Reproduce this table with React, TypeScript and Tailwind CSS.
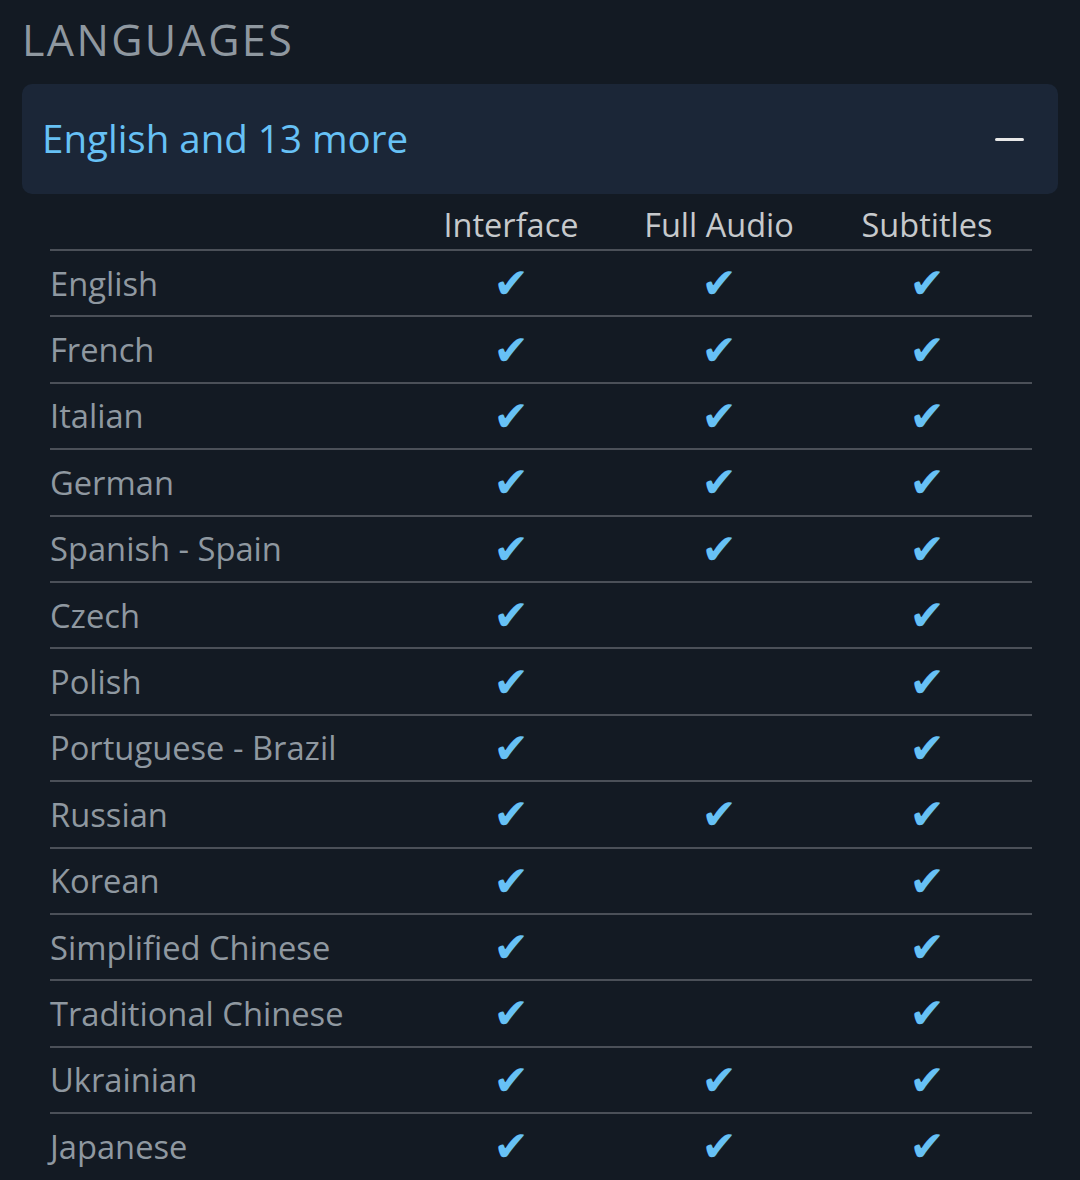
import React from "react";

type Lang = { name: string; ui: boolean; audio: boolean; subs: boolean };

const languages: Lang[] = [
  { name: "English", ui: true, audio: true, subs: true },
  { name: "French", ui: true, audio: true, subs: true },
  { name: "Italian", ui: true, audio: true, subs: true },
  { name: "German", ui: true, audio: true, subs: true },
  { name: "Spanish - Spain", ui: true, audio: true, subs: true },
  { name: "Czech", ui: true, audio: false, subs: true },
  { name: "Polish", ui: true, audio: false, subs: true },
  { name: "Portuguese - Brazil", ui: true, audio: false, subs: true },
  { name: "Russian", ui: true, audio: true, subs: true },
  { name: "Korean", ui: true, audio: false, subs: true },
  { name: "Simplified Chinese", ui: true, audio: false, subs: true },
  { name: "Traditional Chinese", ui: true, audio: false, subs: true },
  { name: "Ukrainian", ui: true, audio: true, subs: true },
  { name: "Japanese", ui: true, audio: true, subs: true },
];

function Check({ on }: { on: boolean }) {
  return (
    <div className="flex items-center justify-center pt-[2px]">
      {on && (
        <span className="text-[#67c1f5] text-[42px] leading-none font-['DejaVu_Sans',sans-serif]">
          ✔
        </span>
      )}
    </div>
  );
}

export default function App() {
  return (
    <div className="min-h-screen bg-[#131a23] px-[22px] pt-[14px] font-['Open_Sans',sans-serif] overflow-hidden">
      {/* Title */}
      <h2 className="text-[43px] leading-[52px] tracking-[2.4px] text-[#8f98a0]">
        LANGUAGES
      </h2>

      {/* Collapsible header */}
      <div className="mt-[18px] h-[110px] rounded-[10px] bg-[#1b2637] flex items-center justify-between pl-[20px] pr-[34px]">
        <span className="text-[38.5px] text-[#67c1f5]">English and 13 more</span>
        <span className="block w-[29px] h-[3px] rounded-full bg-[#e8e8e8]" />
      </div>

      {/* Table */}
      <div className="ml-[28px] w-[982px]">
        <div className="grid grid-cols-[357px_208px_208px_208px] h-[55px] items-center text-[32.5px] text-[#c6c9cc]">
          <div />
          <div className="text-center pt-[7px]">Interface</div>
          <div className="text-center pt-[7px]">Full Audio</div>
          <div className="text-center pt-[7px]">Subtitles</div>
        </div>
        {languages.map((l) => (
          <div
            key={l.name}
            className="grid grid-cols-[357px_208px_208px_208px] h-[66.4px] items-center border-t-2 border-[#4b5058]"
          >
            <div className="text-[32.7px] text-[#8f98a0]">{l.name}</div>
            <Check on={l.ui} />
            <Check on={l.audio} />
            <Check on={l.subs} />
          </div>
        ))}
      </div>
    </div>
  );
}
